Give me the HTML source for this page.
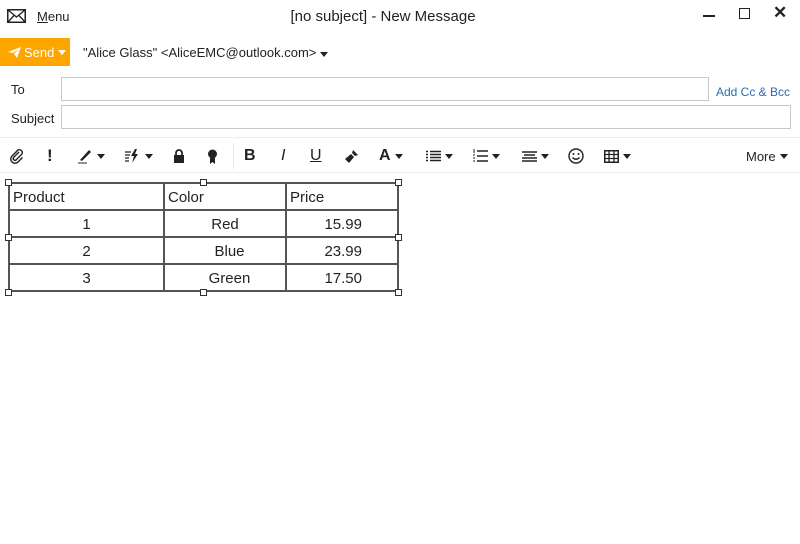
<!DOCTYPE html>
<html><head><meta charset="utf-8"><style>
*{margin:0;padding:0;box-sizing:border-box}
body{width:800px;height:544px;background:#fff;font-family:"Liberation Sans",sans-serif;color:#222;position:relative;overflow:hidden;font-size:13px}
.a{position:absolute}
.inp{position:absolute;border:1px solid #c8c8c8;background:#fff}
.tb{position:absolute;top:145px;height:22px;display:flex;align-items:center}
.caret{display:inline-block;width:0;height:0;border-left:4px solid transparent;border-right:4px solid transparent;border-top:5px solid #222;margin-left:4px}
table{position:absolute;left:8px;top:182px;border-collapse:collapse;font-size:15px;color:#222}
td{border:2px solid #555;height:27px;padding:2px 3px 0}
.h{position:absolute;width:7px;height:7px;border:1px solid #333;background:#fff}
</style></head><body>
<svg class="a" style="left:7px;top:9px" width="19" height="14" viewBox="0 0 19 14"><rect x="0.75" y="0.75" width="17.5" height="12.5" fill="none" stroke="#222" stroke-width="1.5"/><path d="M1 1L9.5 8L18 1M1 13L7 6.5M18 13L12 6.5" fill="none" stroke="#222" stroke-width="1.3"/></svg>
<div class="a" style="left:37px;top:9px;font-size:13px"><u>M</u>enu</div>
<div class="a" style="left:0;width:766px;top:8px;text-align:center;font-size:15px">[no subject] - New Message</div>
<div class="a" style="left:703px;top:15px;width:12px;height:1.5px;background:#222"></div>
<div class="a" style="left:739px;top:8px;width:11px;height:11px;border:1.5px solid #222"></div>
<div class="a" style="left:773px;top:3px;font-size:17px;font-weight:bold">✕</div>
<div class="a" style="left:0;top:38px;width:70px;height:28px;background:#ffa500;color:#fff;font-size:13px;display:flex;align-items:center;padding-left:8px">
<svg width="13" height="11" viewBox="0 0 13 11"><path d="M0 5L13 0L9 11L6 7L11 2L5 6Z" fill="#fff"/></svg><span style="margin-left:3px">Send</span><span class="caret" style="border-top-color:#fff"></span></div>
<div class="a" style="left:83px;top:45px;font-size:13px">"Alice Glass" &lt;AliceEMC@outlook.com&gt;<span class="caret"></span></div>
<div class="a" style="left:11px;top:82px">To</div>
<div class="inp" style="left:61px;top:77px;width:648px;height:24px"></div>
<div class="a" style="left:716px;top:85px;color:#2b6cb0;font-size:12px">Add Cc &amp; Bcc</div>
<div class="a" style="left:11px;top:111px">Subject</div>
<div class="inp" style="left:61px;top:105px;width:730px;height:24px"></div>
<div class="a" style="left:0;top:137px;width:800px;height:1px;background:#eee"></div>
<div class="a" style="left:0;top:172px;width:800px;height:1px;background:#eee"></div>
<div class="a" style="left:233px;top:143px;width:1px;height:26px;background:#e6e6e6"></div>
<div class="tb" style="left:9px"><svg width="16" height="16" viewBox="0 0 16 16"><path d="M10 4L4.5 9.5A1.8 1.8 0 0 0 7 12L13 6A3 3 0 0 0 9 2L3 8A4.2 4.2 0 0 0 9 14L13.5 9.5" fill="none" stroke="#222" stroke-width="1.4"/></svg></div>
<div class="tb" style="left:47px;font-size:17px;font-weight:bold">!</div>
<div class="tb" style="left:77px"><svg width="16" height="16" viewBox="0 0 16 16"><path d="M3 12L12 2L14 4L5 13Z" fill="#222"/><path d="M1 15H10" stroke="#222"/></svg><span class="caret"></span></div>
<div class="tb" style="left:125px"><svg width="16" height="14" viewBox="0 0 16 14"><path d="M0 3H6M0 6H5M0 9H4M0 12H4" stroke="#222" stroke-width="1.3"/><path d="M10 0L6 7H9L7 14L13 5H10L12 0Z" fill="#222"/></svg><span class="caret"></span></div>
<div class="tb" style="left:173px"><svg width="12" height="14" viewBox="0 0 12 14"><path d="M3 6V4A3 3 0 0 1 9 4V6" fill="none" stroke="#222" stroke-width="1.8"/><rect x="1" y="6" width="10" height="8" fill="#222"/></svg></div>
<div class="tb" style="left:207px"><svg width="11" height="15" viewBox="0 0 11 15"><circle cx="5.5" cy="5" r="4.5" fill="#222"/><path d="M3 9L3 15L5.5 13L8 15L8 9Z" fill="#222"/></svg></div>
<div class="tb" style="left:244px;font-size:16px;font-weight:bold">B</div>
<div class="tb" style="left:281px;font-size:16px;font-style:italic">I</div>
<div class="tb" style="left:310px;font-size:16px;text-decoration:underline">U</div>
<div class="tb" style="left:344px"><svg width="15" height="15" viewBox="0 0 15 15"><path d="M9 1L14 6L11 7L8 4Z" fill="#222"/><path d="M7 5L10 8L5 14L1 10Z" fill="#222"/></svg></div>
<div class="tb" style="left:379px;font-size:16px;font-weight:bold">A<span class="caret"></span></div>
<div class="tb" style="left:426px"><svg width="15" height="12" viewBox="0 0 15 12"><path d="M0 1.5H2M4 1.5H15M0 4.5H2M4 4.5H15M0 7.5H2M4 7.5H15M0 10.5H2M4 10.5H15" stroke="#222" stroke-width="1.4"/></svg><span class="caret"></span></div>
<div class="tb" style="left:473px"><svg width="15" height="14" viewBox="0 0 15 14"><path d="M1 0V4M0 6H2M0 9H2M0 12H2" stroke="#222"/><path d="M4 2H15M4 7H15M4 12H15" stroke="#222" stroke-width="1.6"/></svg><span class="caret"></span></div>
<div class="tb" style="left:522px"><svg width="15" height="12" viewBox="0 0 15 12"><path d="M0 2H15M2 5H13M0 8H15M0 11H15" stroke="#222" stroke-width="1.4"/></svg><span class="caret"></span></div>
<div class="tb" style="left:568px"><svg width="16" height="16" viewBox="0 0 16 16"><circle cx="8" cy="8" r="7" fill="none" stroke="#222" stroke-width="1.4"/><circle cx="5.5" cy="6" r="1" fill="#222"/><circle cx="10.5" cy="6" r="1" fill="#222"/><path d="M4.5 9.5Q8 13 11.5 9.5" fill="none" stroke="#222" stroke-width="1.3"/></svg></div>
<div class="tb" style="left:604px"><svg width="15" height="13" viewBox="0 0 15 13"><rect x="0.75" y="0.75" width="13.5" height="11.5" fill="none" stroke="#222" stroke-width="1.5"/><path d="M0 4.5H15M0 8.5H15M5 0V13M10 0V13" stroke="#222" stroke-width="1.3"/></svg><span class="caret"></span></div>
<div class="tb" style="left:746px;font-size:13px">More<span class="caret"></span></div>
<table>
<tr><td style="width:155px">Product</td><td style="width:122px">Color</td><td style="width:112px">Price</td></tr>
<tr><td style="text-align:center">1</td><td style="text-align:center">Red</td><td style="text-align:right;padding-right:35px">15.99</td></tr>
<tr><td style="text-align:center">2</td><td style="text-align:center;padding-left:12px">Blue</td><td style="text-align:right;padding-right:35px">23.99</td></tr>
<tr><td style="text-align:center">3</td><td style="text-align:center;padding-left:12px">Green</td><td style="text-align:right;padding-right:35px">17.50</td></tr>
</table>
<div class="h" style="left:5px;top:179px"></div><div class="h" style="left:200px;top:179px"></div><div class="h" style="left:395px;top:179px"></div>
<div class="h" style="left:5px;top:234px"></div><div class="h" style="left:395px;top:234px"></div>
<div class="h" style="left:5px;top:289px"></div><div class="h" style="left:200px;top:289px"></div><div class="h" style="left:395px;top:289px"></div>
</body></html>
